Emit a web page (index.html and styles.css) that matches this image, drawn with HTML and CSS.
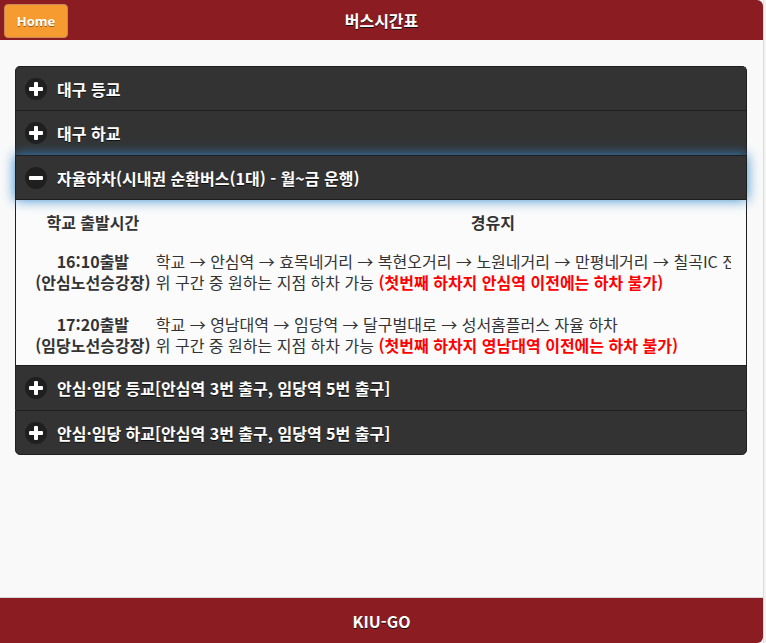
FILE: index.html
```html
<!DOCTYPE html>
<html lang="ko">
<head>
<meta charset="utf-8">
<title>버스시간표</title>
<link rel="stylesheet" href="styles.css">
</head>
<body>
<div class="page">
  <header class="bar top">
    <div class="bar-left"><a class="btn-home" href="#">Home</a></div>
    <h1 class="bar-title">버스시간표</h1>
    <div></div>
  </header>
  <main class="main">
    <div class="set">
      <div class="coll">
        <h3 class="coll-head"><span class="ico plus"></span>대구 등교</h3>
      </div>
      <div class="coll">
        <h3 class="coll-head"><span class="ico plus"></span>대구 하교</h3>
      </div>
      <div class="coll open">
        <h3 class="coll-head focus"><span class="ico minus"></span>자율하차(시내권 순환버스(1대) - 월~금 운행)</h3>
        <div class="coll-body">
          <div class="clip">
          <table class="tt">
            <thead>
              <tr><th class="c1">학교 출발시간</th><th class="c2">경유지</th></tr>
            </thead>
            <tbody>
              <tr>
                <td class="c1"><b>16:10출발</b><br><b>(안심노선승강장)</b></td>
                <td class="c2">학교 → 안심역 → 효목네거리 → 복현오거리 → 노원네거리 → 만평네거리 → 칠곡IC 전 자율 하차<br>위 구간 중 원하는 지점 하차 가능 <b class="red">(첫번째 하차지 안심역 이전에는 하차 불가)</b></td>
              </tr>
              <tr>
                <td class="c1"><b>17:20출발</b><br><b>(임당노선승강장)</b></td>
                <td class="c2">학교 → 영남대역 → 임당역 → 달구벌대로 → 성서홈플러스 자율 하차<br>위 구간 중 원하는 지점 하차 가능 <b class="red">(첫번째 하차지 영남대역 이전에는 하차 불가)</b></td>
              </tr>
            </tbody>
          </table>
          </div>
        </div>
      </div>
      <div class="coll">
        <h3 class="coll-head"><span class="ico plus"></span>안심·임당 등교[안심역 3번 출구, 임당역 5번 출구]</h3>
      </div>
      <div class="coll last">
        <h3 class="coll-head"><span class="ico plus"></span>안심·임당 하교[안심역 3번 출구, 임당역 5번 출구]</h3>
      </div>
    </div>
  </main>
  <footer class="bar bottom">
    <h4 class="bar-title">KIU-GO</h4>
  </footer>
</div>
</body>
</html>
```
FILE: styles.css
```css
* { box-sizing: border-box; }
html, body { margin: 0; padding: 0; }
body {
  background: #f2f2f2;
  font-family: "Noto Sans CJK KR", "Noto Sans", sans-serif;
  color: #333;
  height: 643px;
  overflow: hidden;
}
.page {
  width: 764px;
  height: 643px;
  background: #f9f9f9;
  border-right: 1px solid #dcdcdc;
  display: flex;
  flex-direction: column;
}
.bar {
  background: #8a1c22;
  color: #fff;
  text-shadow: 0 1px 0 #111;
}
.bar.top {
  height: 40px;
  border-top-right-radius: 6px;
  display: grid;
  grid-template-columns: 1fr auto 1fr;
  align-items: center;
}
.bar.bottom {
  height: 46px;
  border-top: 1px solid #d6d6d6;
  border-bottom-right-radius: 6px;
  display: flex;
  align-items: center;
  justify-content: center;
}
.bar-title {
  margin: 0;
  font-size: 16px;
  font-weight: 700;
  line-height: 20px;
}
.bar.top .bar-title { margin-top: -1px; }
.bar-left { padding-left: 4px; display: flex; }
.btn-home {
  display: flex;
  align-items: center;
  justify-content: center;
  width: 64px;
  height: 34px;
  margin-top: 1px;
  background: #f59b2f;
  border: 1px solid #c98a5a;
  border-radius: 4px;
  color: #fff;
  font-family: "Open Sans", "Noto Sans", sans-serif;
  font-weight: 700;
  font-size: 13px;
  text-decoration: none;
  text-shadow: 0 1px 0 #a05a10;
}
.main { flex: 1; padding: 26px 16px 0 15px; }
.set { border-radius: 5px; }
.coll-head {
  margin: 0;
  height: 45px;
  background: #333;
  border: 1px solid #1f1f1f;
  border-bottom: 0;
  color: #fff;
  text-shadow: 0 1px 0 #111;
  font-size: 16px;
  font-weight: 700;
  display: flex;
  align-items: center;
  padding-left: 9px;
}
.coll:first-child .coll-head { height: 44px; border-radius: 5px 5px 0 0; }
.coll.last .coll-head { border-bottom: 1px solid #1f1f1f; border-radius: 0 0 5px 5px; }
.coll-head.focus {
  position: relative;
  z-index: 1;
  box-shadow: 0 0 12px #38c;
  border-bottom: 1px solid #1f1f1f;
}
.ico {
  width: 22px;
  height: 22px;
  border-radius: 50%;
  background: #1f1f1f;
  margin-right: 10px;
  position: relative;
  flex: none;
}
.ico::before, .ico::after {
  content: "";
  position: absolute;
  background: #fff;
  border-radius: 1px;
}
.ico::before { left: 4px; top: 9px; width: 14px; height: 4px; }
.plus::after { left: 9px; top: 4px; width: 4px; height: 14px; }
.coll-body {
  background: #fbfbfb;
  border-left: 1px solid #1f1f1f;
  border-right: 1px solid #1f1f1f;
  height: 165px;
  padding: 8px 15px 0 17px;
}
.clip { overflow: hidden; height: 100%; }
.tt {
  border-collapse: collapse;
  width: 800px;
  table-layout: fixed;
  font-size: 16px;
  line-height: 21px;
  color: #333;
}
.tt th {
  font-weight: 700;
  padding: 4px 0 18px;
  text-align: center;
}
.tt th.c1 { width: 119px; }
.tt th.c2 { width: 676px; }
.tt td { padding: 0 0 21px; vertical-align: top; white-space: nowrap; }
.tt td.c1 { text-align: center; }
.tt td.c2 { padding-left: 3px; overflow: hidden; }
.red { color: #ff0000; font-weight: 700; }
```
